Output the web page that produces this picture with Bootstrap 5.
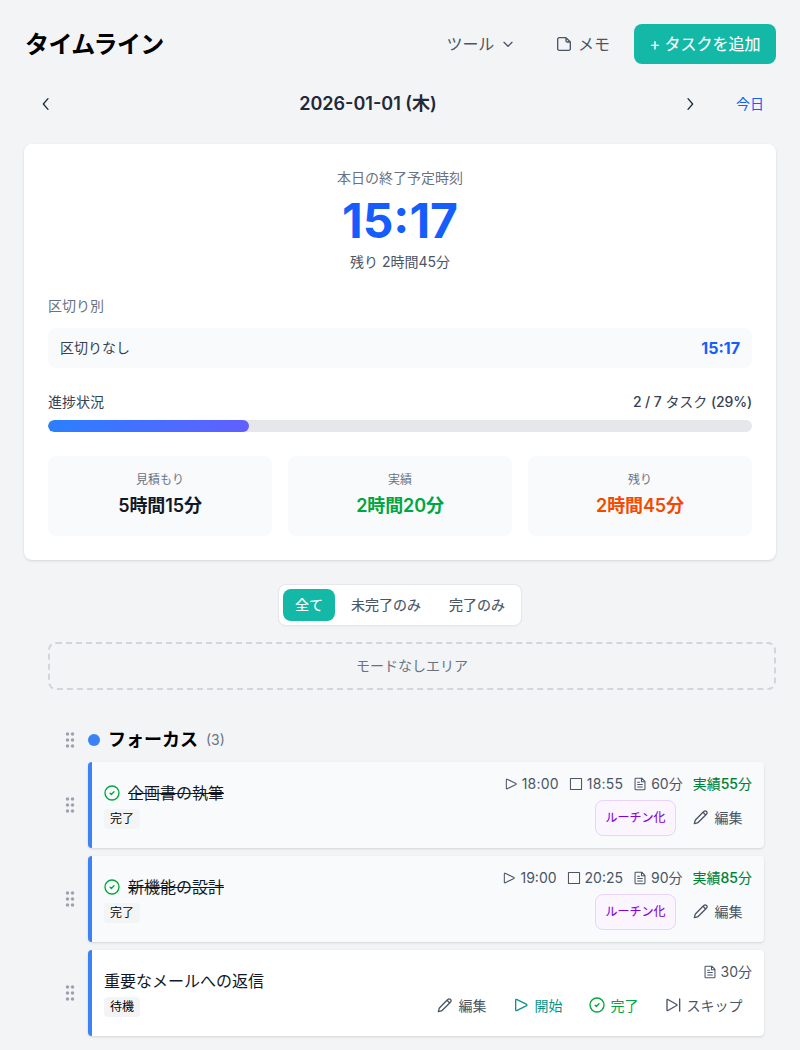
<!DOCTYPE html>
<html lang="ja">
<head>
<meta charset="utf-8">
<meta name="viewport" content="width=device-width, initial-scale=1">
<title>タイムライン</title>
<link href="https://cdn.jsdelivr.net/npm/bootstrap@5.3.0/dist/css/bootstrap.min.css" rel="stylesheet">
<style>
body{font-family:Inter,"Noto Sans CJK JP",sans-serif;background:#f3f4f6;color:#000;overflow:hidden;height:1050px}
svg{fill:none;stroke:currentColor;stroke-width:2;stroke-linecap:round;stroke-linejoin:round;flex:none;display:block}
.c5{color:#6a7282}.c6{color:#4a5565}.c7{color:#364153}.c8{color:#1e2939}.c9{color:#101828}
.blue{color:#155dfc}.green{color:#00a63e}.orange{color:#f54900}.teal{color:#0d9488}
.t12{font-size:12px;line-height:16px}.t14{font-size:14px;line-height:20px}.t16{font-size:16px;line-height:24px}.t18{font-size:18px;line-height:28px}
.med{font-weight:500}
.semi{-webkit-text-stroke:.1px currentColor}
.title{font-size:24px;line-height:32px;letter-spacing:-.6px;padding:1px 0 0 1px}
.tool{height:40px}
.tools-label{letter-spacing:-.2px}
.add{background:#14b8a6;color:#fff;border-radius:8px;width:142px;height:40px}
.datebar{height:32px;padding:0 12px 0 14px}
.datebar svg{stroke-width:2}
.today{margin-left:38px}
.panel{background:#fff;border-radius:8px;box-shadow:0 1px 3px rgba(0,0,0,.1),0 1px 2px -1px rgba(0,0,0,.1)}
.summary{height:416px;padding:24px}
.clock{font-size:48px;line-height:48px;margin:9px 0 7px}
.soft{background:#f9fafb;border-radius:8px}
.total{height:40px;padding:0 12px;margin-top:12px}
.count{letter-spacing:-.12px}
.meter{height:12px;background:#e5e7eb;border-radius:6px}
.meter .progress-bar{background:linear-gradient(90deg,#2b7fff,#615fff);border-radius:6px}
.stat{height:80px;padding-top:12px}
.stat .t18{font-weight:600;letter-spacing:-.1px}
.stat .t12{margin:4px 0}
.tabs{border:1px solid #e5e7eb;background:#fff;border-radius:8px;padding:4px;height:42px;box-shadow:0 1px 2px rgba(0,0,0,.03)}
.tabs button{border:0;background:none;padding:0 12px;height:32px;border-radius:8px;-webkit-text-stroke:.15px currentColor}
.tabs .on{background:#14b8a6;color:#fff}
.drop{border:2px dashed #d1d5dc;border-radius:8px;height:48px;margin:16px 0 0 24px}
.group{padding:36px 12px 0 40px}
.head{height:28px;margin-bottom:8px}
.dot{width:12px;height:12px;background:#3b82f6}
.grip{width:12px;height:16px;color:#99a1af;fill:currentColor;stroke:none;margin-right:12px}
.line{margin-bottom:8px}
.task{height:86px;border-left:4px solid #3b82f6;border-radius:4px;padding:8px 12px;color:#101828}
.task.done{background:#f9fafb}
.left{padding-top:11px}
.tag{background:#f3f4f6;border-radius:4px;padding:2px 6px;color:#000;margin-top:4px}
.meta,.acts,.routine,.act{display:flex;align-items:center;justify-content:flex-end}
.meta{height:28px}
.meta svg{margin-right:4px;stroke-width:1.8}
.meta span{margin-right:10px}
.meta span:last-child{margin-right:0}
.meta .clk{letter-spacing:.2px}
.meta b{font-weight:400;color:#008236}
.meta b i{font-style:normal;font-weight:500}
.acts{height:36px;margin-top:2px;gap:8px;font-size:14px}
.routine{justify-content:center;border:1px solid #e9d4ff;background:#faf5ff;color:#8200db;border-radius:8px;height:36px;width:81px}
.act{padding:0 9.500px 2px 8.500px;gap:6px}
</style>
</head>
<body>
<svg class="d-none">
<symbol id="play" viewBox="0 0 24 24"><path d="M5.400 3.700C5 3.400 4 3.700 4 4.500v15c0 .800 1 1.100 1.400.8L20.500 12.800c.600-.350.600-1.250 0-1.600z"/></symbol>
<symbol id="stop" viewBox="0 0 24 24"><rect x="2.500" y="2.500" width="19" height="19" rx=".6"/></symbol>
<symbol id="page" viewBox="0 0 24 24"><path d="M3.500 20.500v-17A1.500 1.500 0 0 1 5 2h10l5.500 5.500v13A1.500 1.500 0 0 1 19 22H5a1.500 1.500 0 0 1-1.500-1.500zM8 9h3M8 13h8M8 17h8M14.500 2v6h6"/></symbol>
<symbol id="pencil" viewBox="0 0 24 24"><path d="m15 5 1.300-1.300a2.800 2.800 0 0 1 4 4L19 9M15 5 4 16a3 3 0 0 0-.8 1.400L2 22l4.600-1.200A3 3 0 0 0 8 20L19 9M15 5l4 4"/></symbol>
<symbol id="check" viewBox="0 0 24 24"><circle cx="12" cy="12" r="10.500"/><path d="m9 12.200 2 2 4-4"/></symbol>
<symbol id="skip" viewBox="0 0 24 24"><path d="M22 3v18M4.400 3.700C3.800 3.300 3 3.700 3 4.500v15c0 .800.800 1.200 1.400.8L17.500 12.800c.600-.350.600-1.250 0-1.600z"/></symbol>
<symbol id="dots" viewBox="0 0 12 16"><circle cx="3.500" cy="2" r="1.750"/><circle cx="8.500" cy="2" r="1.750"/><circle cx="3.500" cy="8" r="1.750"/><circle cx="8.500" cy="8" r="1.750"/><circle cx="3.500" cy="14" r="1.750"/><circle cx="8.500" cy="14" r="1.750"/></symbol>
</svg>
<main class="p-4">
<header class="d-flex align-items-center justify-content-between">
<h1 class="title fw-bold m-0">タイムライン</h1>
<div class="d-flex align-items-center t16 c6">
<div class="tool d-flex align-items-center"><span class="tools-label">ツール</span><svg style="margin-left:6px" width="16" height="16" viewBox="0 0 24 24"><path d="m6 9.500 6 6 6-6"/></svg></div>
<div class="tool d-flex align-items-center" style="margin:0 24px 0 40px;gap:6px"><svg width="16" height="16" viewBox="0 0 24 24"><path d="M15 2.500H5A2.500 2.500 0 0 0 2.500 5v14A2.500 2.500 0 0 0 5 21.500h14a2.500 2.500 0 0 0 2.500-2.500V9zM15 2.500V7a2 2 0 0 0 2 2h4.500"/></svg><span>メモ</span></div>
<button class="add semi border-0 p-0 text-nowrap">+ タスクを追加</button>
</div>
</header>
<nav class="datebar d-flex align-items-center t18 c8 mt-4">
<svg width="16" height="16" viewBox="0 0 24 24"><path d="m15 4-7 8 7 8"/></svg>
<strong class="flex-fill text-center" style="font-weight:600">2026-01-01 (木)</strong>
<svg width="16" height="16" viewBox="0 0 24 24"><path d="m9 4 7 8-7 8"/></svg>
<span class="today t14 blue">今日</span>
</nav>
<section class="panel summary mt-4">
<div class="text-center"><div class="t14 c5">本日の終了予定時刻</div><div class="clock blue fw-bold">15:17</div><div class="t14 c6">残り 2時間45分</div></div>
<div class="t14 c5 mt-4">区切り別</div>
<div class="soft total d-flex align-items-center justify-content-between t14 c7"><span>区切りなし</span><strong class="blue t16">15:17</strong></div>
<div class="d-flex justify-content-between t14 c7 mt-4 mb-2"><span>進捗状況</span><span class="count"><span class="med">2 / 7</span> タスク <span class="med">(29%)</span></span></div>
<div class="progress meter"><div class="progress-bar" style="width:28.57%"></div></div>
<div class="row row-cols-3 gx-3 mt-4 text-center">
<div class="col"><div class="soft stat"><div class="t12 c5">見積もり</div><div class="t18 c9">5時間15分</div></div></div>
<div class="col"><div class="soft stat"><div class="t12 c5">実績</div><div class="t18 green">2時間20分</div></div></div>
<div class="col"><div class="soft stat"><div class="t12 c5">残り</div><div class="t18 orange">2時間45分</div></div></div>
</div>
</section>
<div class="d-flex justify-content-center mt-4"><div class="tabs d-flex gap-1 t14"><button class="on">全て</button><button class="c6">未完了のみ</button><button class="c6">完了のみ</button></div></div>
<div class="drop d-flex align-items-center justify-content-center t14 c5">モードなしエリア</div>
<section class="group">
<div class="d-flex align-items-center head"><svg class="grip"><use href="#dots"/></svg><span class="dot rounded-circle"></span><h2 class="t18 fw-bold m-0 ms-2">フォーカス</h2><span class="t14 c5 ms-2">(3)</span></div>
<div class="line d-flex align-items-center"><svg class="grip"><use href="#dots"/></svg><article class="panel task done flex-fill d-flex justify-content-between">
<div class="left"><div class="t16 d-flex align-items-center gap-2"><svg class="green" width="16" height="16"><use href="#check"/></svg><s>企画書の執筆</s></div><span class="tag t12 d-inline-block">完了</span></div>
<div class="right"><div class="meta t14 c6"><svg width="14" height="14"><use href="#play"/></svg><span class="clk">18:00</span><svg width="14" height="14"><use href="#stop"/></svg><span class="clk">18:55</span><svg width="14" height="14"><use href="#page"/></svg><span>60分</span><b class="semi">実績<i>55</i>分</b></div><div class="acts"><span class="routine semi t12">ルーチン化</span><span class="act c6"><svg width="16" height="16"><use href="#pencil"/></svg>編集</span></div></div>
</article></div>
<div class="line d-flex align-items-center"><svg class="grip"><use href="#dots"/></svg><article class="panel task done flex-fill d-flex justify-content-between">
<div class="left"><div class="t16 d-flex align-items-center gap-2"><svg class="green" width="16" height="16"><use href="#check"/></svg><s>新機能の設計</s></div><span class="tag t12 d-inline-block">完了</span></div>
<div class="right"><div class="meta t14 c6"><svg width="14" height="14"><use href="#play"/></svg><span>19:00</span><svg width="14" height="14"><use href="#stop"/></svg><span>20:25</span><svg width="14" height="14"><use href="#page"/></svg><span>90分</span><b class="semi">実績<i>85</i>分</b></div><div class="acts"><span class="routine semi t12">ルーチン化</span><span class="act c6"><svg width="16" height="16"><use href="#pencil"/></svg>編集</span></div></div>
</article></div>
<div class="line d-flex align-items-center"><svg class="grip"><use href="#dots"/></svg><article class="panel task flex-fill d-flex justify-content-between">
<div class="left"><div class="t16">重要なメールへの返信</div><span class="tag t12 d-inline-block">待機</span></div>
<div class="right"><div class="meta t14 c6"><svg width="14" height="14"><use href="#page"/></svg><span>30分</span></div><div class="acts"><span class="act c6"><svg width="16" height="16"><use href="#pencil"/></svg>編集</span><span class="act teal"><svg width="16" height="16"><use href="#play"/></svg>開始</span><span class="act green"><svg width="16" height="16"><use href="#check"/></svg>完了</span><span class="act c6"><svg width="16" height="16"><use href="#skip"/></svg>スキップ</span></div></div>
</article></div>
</section>
</main>
<script src="https://cdn.jsdelivr.net/npm/bootstrap@5.3.0/dist/js/bootstrap.bundle.min.js"></script>
</body>
</html>
